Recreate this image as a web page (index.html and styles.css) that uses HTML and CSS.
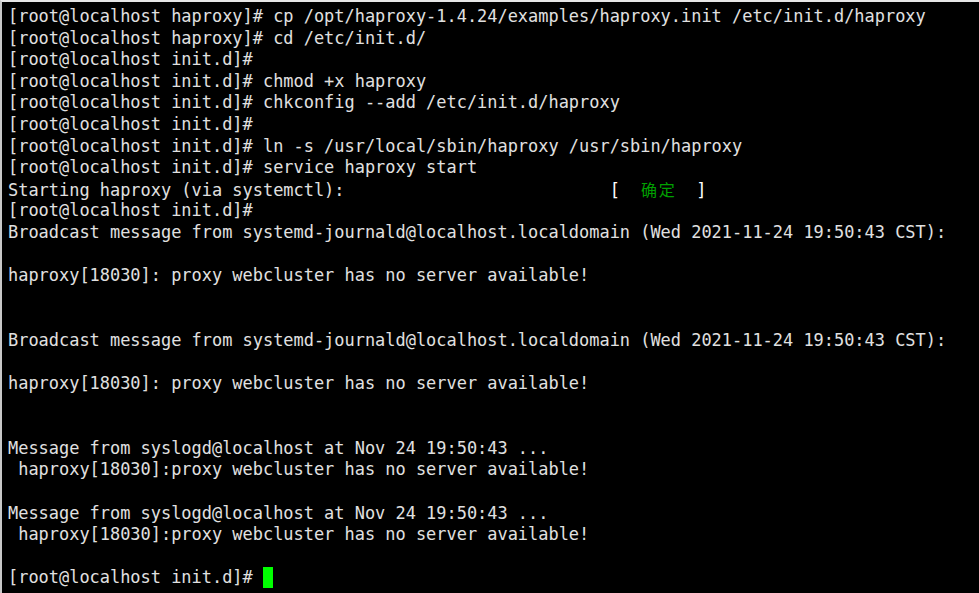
FILE: index.html
```html
<!DOCTYPE html>
<html>
<head>
<meta charset="utf-8">
<link rel="stylesheet" href="styles.css">
</head>
<body>
<div class="term">
<div class="line">[root@localhost haproxy]# cp /opt/haproxy-1.4.24/examples/haproxy.init /etc/init.d/haproxy</div>
<div class="line">[root@localhost haproxy]# cd /etc/init.d/</div>
<div class="line">[root@localhost init.d]# </div>
<div class="line">[root@localhost init.d]# chmod +x haproxy</div>
<div class="line">[root@localhost init.d]# chkconfig --add /etc/init.d/haproxy</div>
<div class="line">[root@localhost init.d]# </div>
<div class="line">[root@localhost init.d]# ln -s /usr/local/sbin/haproxy /usr/sbin/haproxy</div>
<div class="line">[root@localhost init.d]# service haproxy start</div>
<div class="line">Starting haproxy (via systemctl):                          <span class="br">[</span>  <span class="ok"><span class="cjk">确</span><span class="cjk">定</span></span>  <span class="br">]</span></div>
<div class="line">[root@localhost init.d]# </div>
<div class="line">Broadcast message from systemd-journald@localhost.localdomain (Wed 2021-11-24 19:50:43 CST):</div>
<div class="line"> </div>
<div class="line">haproxy[18030]: proxy webcluster has no server available!</div>
<div class="line"> </div>
<div class="line"> </div>
<div class="line">Broadcast message from systemd-journald@localhost.localdomain (Wed 2021-11-24 19:50:43 CST):</div>
<div class="line"> </div>
<div class="line">haproxy[18030]: proxy webcluster has no server available!</div>
<div class="line"> </div>
<div class="line"> </div>
<div class="line">Message from syslogd@localhost at Nov 24 19:50:43 ...</div>
<div class="line"> haproxy[18030]:proxy webcluster has no server available!</div>
<div class="line"> </div>
<div class="line">Message from syslogd@localhost at Nov 24 19:50:43 ...</div>
<div class="line"> haproxy[18030]:proxy webcluster has no server available!</div>
<div class="line"> </div>
<div class="line">[root@localhost init.d]# <span class="cursor"> </span></div>
</div>
</body>
</html>
```
FILE: styles.css
```css
html, body {
  margin: 0;
  padding: 0;
  background: #000;
  height: 100%;
  overflow: hidden;
}
.term {
  box-sizing: border-box;
  height: 593px;
  border-top: 2px solid #e6e6e6;
  border-left: 2px solid #c8c8c8;
  padding: 4px 0 0 6px;
  background: #000;
  color: #e0e0e0;
  font-family: "DejaVu Sans Mono", monospace;
  font-size: 16.94px;
  line-height: 21.6px;
}
.line {
  white-space: pre;
  height: 21.6px;
}
.br {
  color: #ffffff;
}
.ok {
  color: #00a000;
}
.cjk {
  display: inline-block;
  width: 2ch;
  text-align: center;
  font-family: "Noto Sans CJK SC", sans-serif;
  font-size: 16px;
}
.cursor {
  display: inline-block;
  width: 10px;
  height: 21px;
  vertical-align: top;
  background: #00ff00;
}
```
